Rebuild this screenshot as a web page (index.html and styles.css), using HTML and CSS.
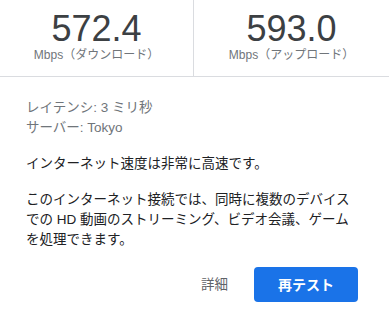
FILE: index.html
```html
<!DOCTYPE html>
<html lang="ja">
<head>
<meta charset="utf-8">
<link rel="stylesheet" href="styles.css">
</head>
<body>
<div class="card">
  <div class="speeds">
    <div class="speed speed-down">
      <div class="value">572.4</div>
      <div class="unit">Mbps（ダウンロード）</div>
    </div>
    <div class="speed">
      <div class="value">593.0</div>
      <div class="unit">Mbps（アップロード）</div>
    </div>
  </div>
  <div class="details">
    <div class="meta">
      <div>レイテンシ: 3 ミリ秒</div>
      <div>サーバー: Tokyo</div>
    </div>
    <p class="para">インターネット速度は非常に高速です。</p>
    <p class="para para-wrap">このインターネット接続では、同時に複数のデバイスでの HD 動画のストリーミング、ビデオ会議、ゲームを処理できます。</p>
    <div class="actions">
      <span class="link-btn">詳細</span>
      <span class="primary-btn">再テスト</span>
    </div>
  </div>
</div>
</body>
</html>
```

FILE: styles.css
```css
html, body {
  margin: 0;
  padding: 0;
  background: #ffffff;
}

body {
  font-family: "Liberation Sans", Arial, "Noto Sans CJK JP", sans-serif;
  color: #202124;
}

.card {
  width: 389px;
}

.speeds {
  display: flex;
  height: 76px;
  border-bottom: 1px solid #dadce0;
}

.speed {
  flex: 1;
  display: flex;
  flex-direction: column;
  align-items: center;
  padding-top: 11px;
}

.speed-down {
  flex: 0 0 193px;
  border-right: 1px solid #dadce0;
}

.value {
  font-size: 36px;
  line-height: 36px;
  color: #3c4043;
}

.unit {
  font-size: 12px;
  line-height: 14px;
  margin-top: 1px;
  color: #70757a;
}

.details {
  padding: 21px 26px 0 26px;
  font-size: 13.5px;
  line-height: 20px;
}

.meta {
  color: #70757a;
}

.para {
  margin: 16px 0 0 0;
  color: #202124;
}

.para-wrap {
  width: 330px;
}

.actions {
  display: flex;
  justify-content: flex-end;
  align-items: center;
  gap: 26px;
  margin-top: 17px;
  padding-right: 5px;
}

.link-btn {
  font-size: 13.5px;
  color: #5f6368;
}

.primary-btn {
  display: flex;
  align-items: center;
  justify-content: center;
  width: 104px;
  height: 35px;
  background: #1a73e8;
  border-radius: 4px;
  color: #ffffff;
  font-size: 14px;
  font-weight: bold;
}
```
